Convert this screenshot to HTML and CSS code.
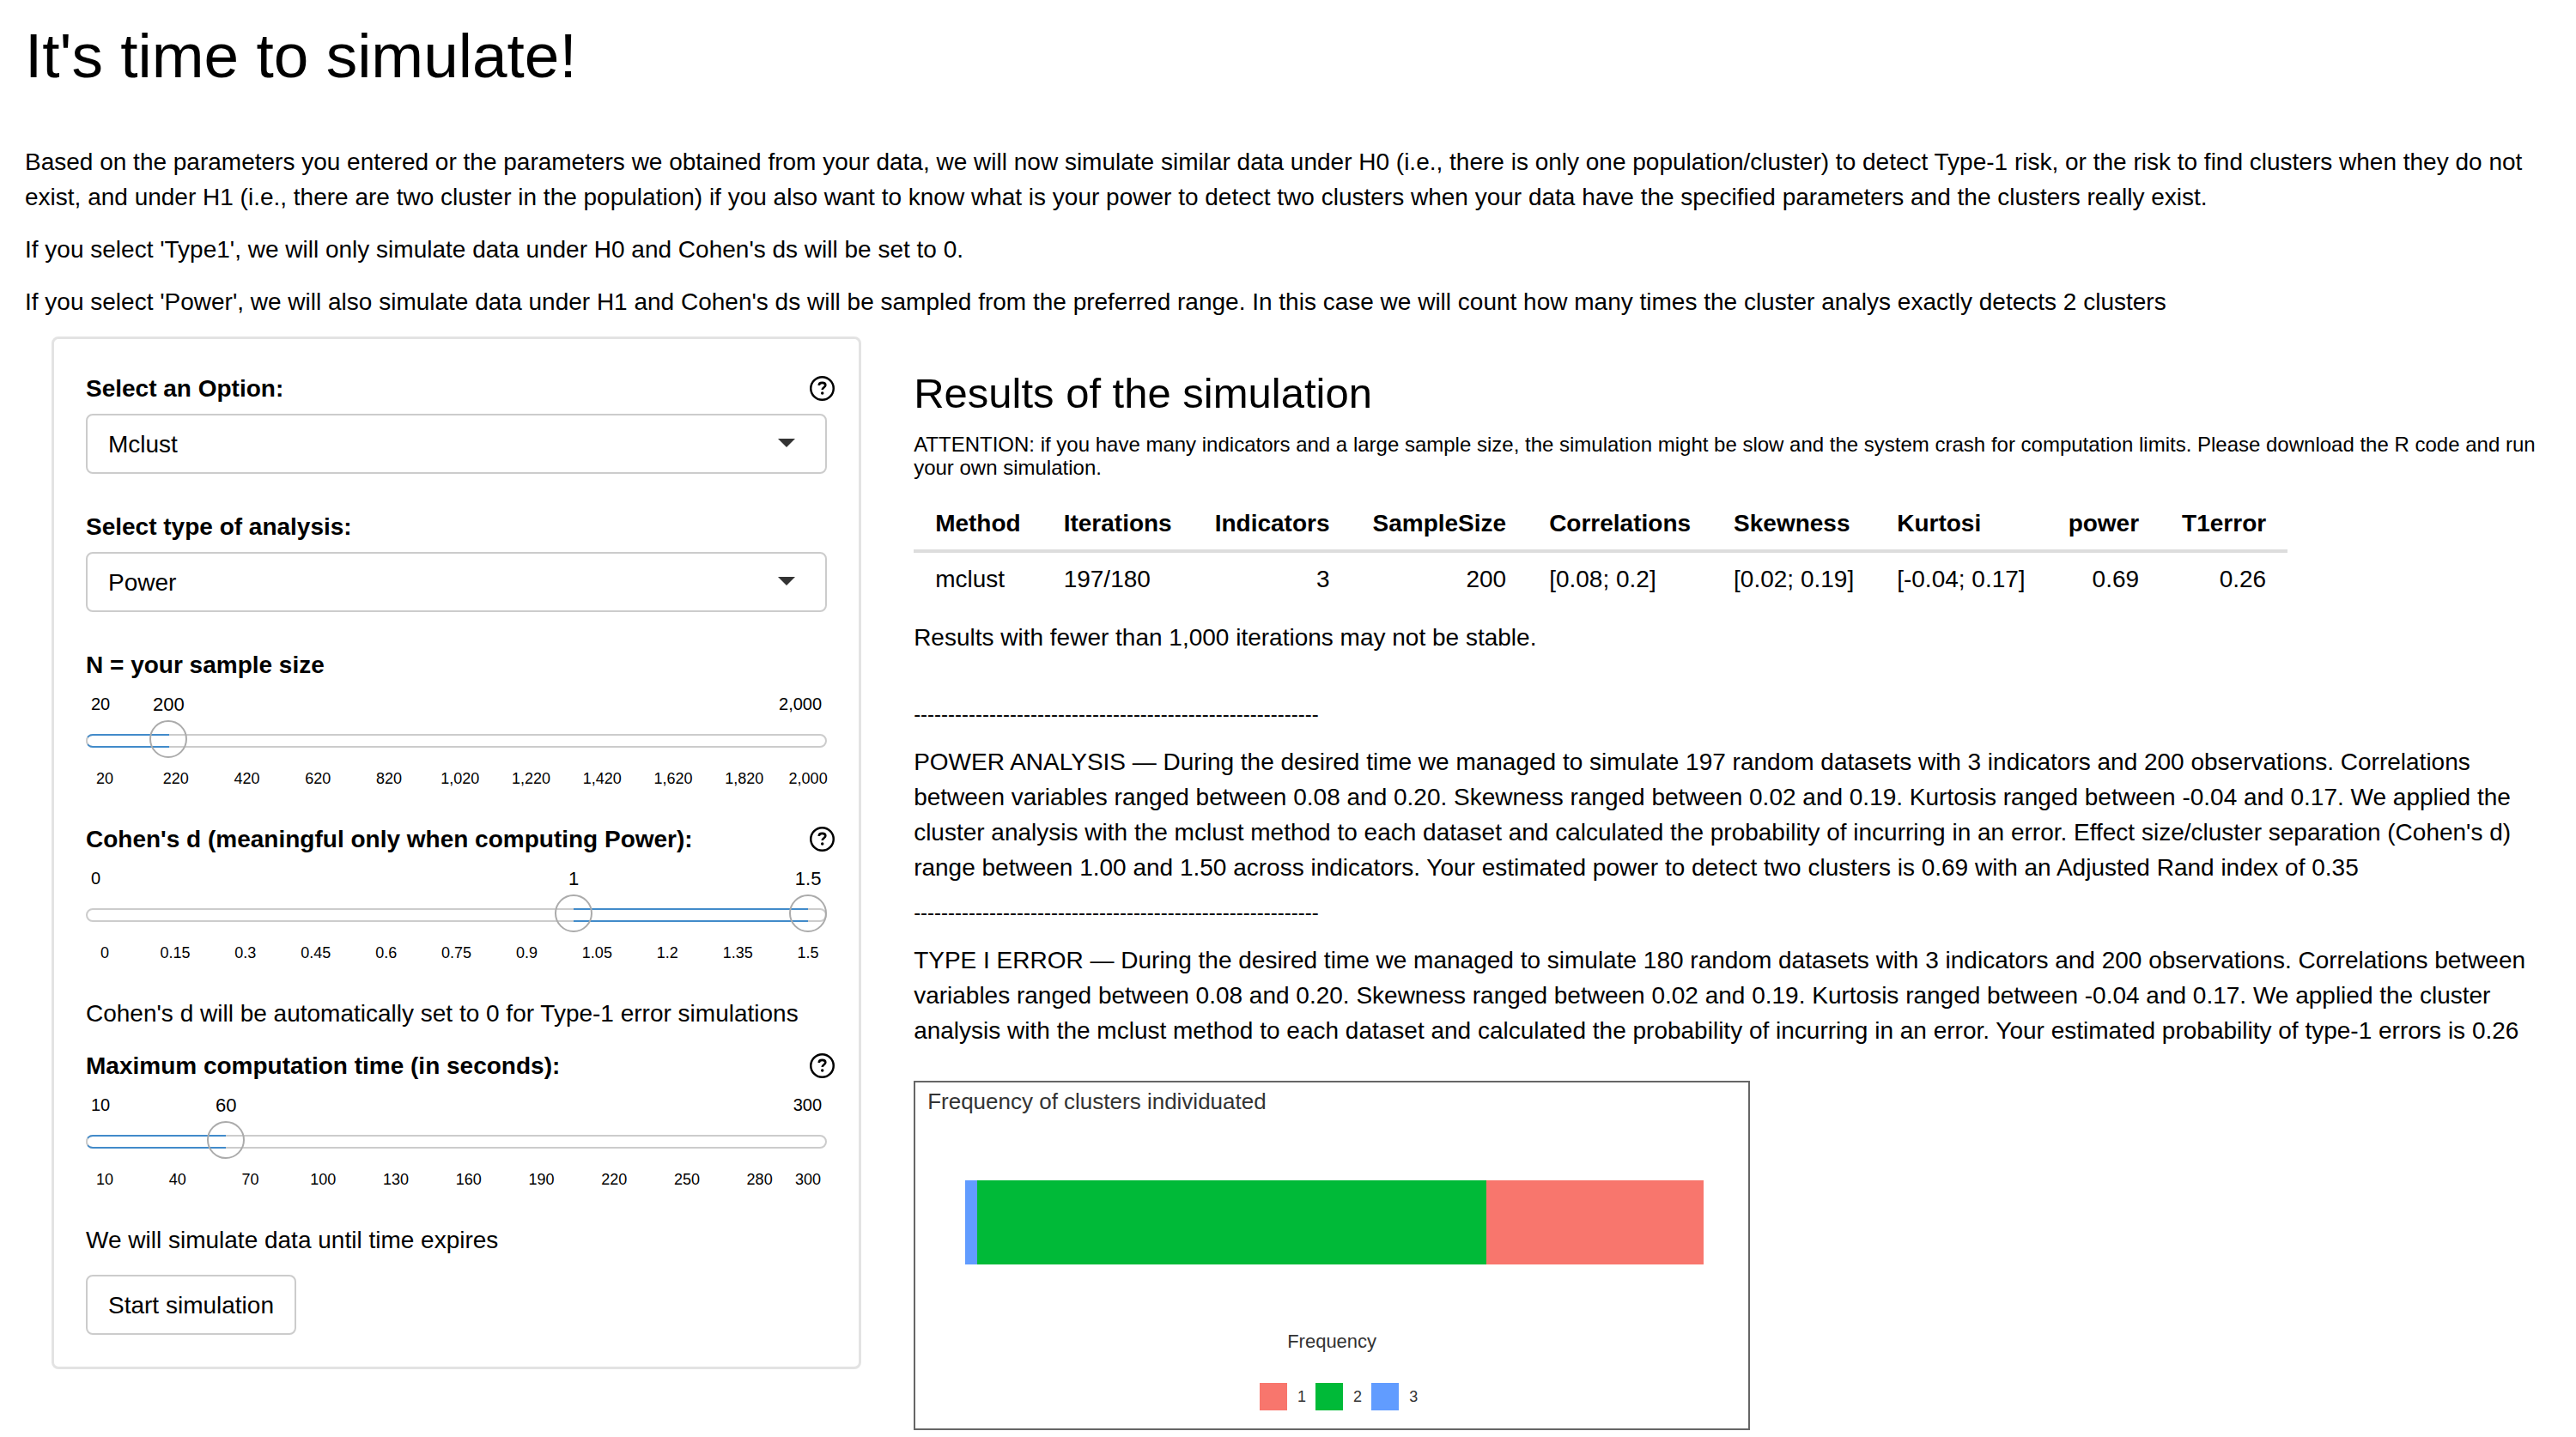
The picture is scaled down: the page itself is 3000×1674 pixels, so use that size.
FILE: index.html
```html
<!DOCTYPE html>
<html lang="en">
<head>
<meta charset="utf-8">
<title>It's time to simulate!</title>
<link rel="stylesheet" href="styles.css">
</head>
<body>
<svg class="sprite" aria-hidden="true">
  <symbol id="help" viewBox="0 0 28 28">
    <g fill="none" stroke="currentColor">
      <circle cx="14" cy="14" r="12.8" stroke-width="2.4"/>
      <path d="M10.4 10.6c0-2.2 1.5-3 3.6-3s3.7 1 3.7 2.8c0 2.4-3.5 2.3-3.5 5" stroke-width="2.5"/>
    </g>
    <circle cx="14.2" cy="19.4" r="1.7" fill="currentColor"/>
  </symbol>
</svg>

<header class="intro">
  <h1>It's time to simulate!</h1>
  <p>Based on the parameters you entered or the parameters we obtained from your data, we will now simulate similar data under H0 (i.e., there is only one population/cluster) to detect Type-1 risk, or the risk to find clusters when they do not exist, and under H1 (i.e., there are two cluster in the population) if you also want to know what is your power to detect two clusters when your data have the specified parameters and the clusters really exist.</p>
  <p>If you select 'Type1', we will only simulate data under H0 and Cohen's ds will be set to 0.</p>
  <p>If you select 'Power', we will also simulate data under H1 and Cohen's ds will be sampled from the preferred range. In this case we will count how many times the cluster analys exactly detects 2 clusters</p>
</header>

<div class="layout">
  <form class="sidebar">
    <div class="field">
      <div class="field-head">
        <label for="method">Select an Option:</label>
        <button type="button" class="help" aria-label="Help on methods"><svg><use href="#help"/></svg></button>
      </div>
      <div class="select"><select id="method"><option>Mclust</option></select></div>
    </div>
    <div class="field">
      <div class="field-head"><label for="analysis">Select type of analysis:</label></div>
      <div class="select"><select id="analysis"><option>Power</option><option>Type1</option></select></div>
    </div>

    <div class="field field-slider">
      <div class="field-head"><label for="n">N = your sample size</label></div>
      <div class="scale">
        <span class="min">20</span><span class="max">2,000</span>
        <div class="values"><output class="value" for="n" style="left:9.09%">200</output></div>
      </div>
      <div class="track">
        <div class="rail"></div>
        <div class="fill fill-start" style="width:11.25%"></div>
        <input type="range" id="n" min="20" max="2000" step="10" value="200">
      </div>
      <ol class="ticks ticks-n">
        <li>20</li><li>220</li><li>420</li><li>620</li><li>820</li><li>1,020</li><li>1,220</li><li>1,420</li><li>1,620</li><li>1,820</li><li>2,000</li>
      </ol>
    </div>

    <div class="field field-slider">
      <div class="field-head">
        <label for="d-low">Cohen's d (meaningful only when computing Power):</label>
        <button type="button" class="help" aria-label="Help on Cohen's d"><svg><use href="#help"/></svg></button>
      </div>
      <div class="scale">
        <span class="min">0</span>
        <div class="values">
          <output class="value" for="d-low" style="left:66.67%">1</output>
          <output class="value" for="d-high" style="left:100%">1.5</output>
        </div>
      </div>
      <div class="track">
        <div class="rail"></div>
        <div class="fill" style="left:65.8%;width:31.6%"></div>
        <input type="range" id="d-low" min="0" max="1.5" step="0.05" value="1">
        <input type="range" id="d-high" aria-label="Cohen's d, upper limit" min="0" max="1.5" step="0.05" value="1.5">
      </div>
      <ol class="ticks ticks-d">
        <li>0</li><li>0.15</li><li>0.3</li><li>0.45</li><li>0.6</li><li>0.75</li><li>0.9</li><li>1.05</li><li>1.2</li><li>1.35</li><li>1.5</li>
      </ol>
    </div>

    <p class="note">Cohen's d will be automatically set to 0 for Type-1 error simulations</p>

    <div class="field field-slider">
      <div class="field-head">
        <label for="time">Maximum computation time (in seconds):</label>
        <button type="button" class="help" aria-label="Help on computation time"><svg><use href="#help"/></svg></button>
      </div>
      <div class="scale">
        <span class="min">10</span><span class="max">300</span>
        <div class="values"><output class="value" for="time" style="left:17.24%">60</output></div>
      </div>
      <div class="track">
        <div class="rail"></div>
        <div class="fill fill-start" style="width:18.9%"></div>
        <input type="range" id="time" min="10" max="300" step="10" value="60">
      </div>
      <ol class="ticks ticks-time">
        <li>10</li><li>40</li><li>70</li><li>100</li><li>130</li><li>160</li><li>190</li><li>220</li><li>250</li><li>280</li><li>300</li>
      </ol>
    </div>

    <p class="note">We will simulate data until time expires</p>
    <button type="button" class="start">Start simulation</button>
  </form>

  <main class="results">
    <h2>Results of the simulation</h2>
    <p class="attention">ATTENTION: if you have many indicators and a large sample size, the simulation might be slow and the system crash for computation limits. Please download the R code and run your own simulation.</p>
    <table>
      <thead>
        <tr><th>Method</th><th>Iterations</th><th class="num">Indicators</th><th class="num">SampleSize</th><th>Correlations</th><th>Skewness</th><th>Kurtosi</th><th class="num">power</th><th class="num">T1error</th></tr>
      </thead>
      <tbody>
        <tr><td>mclust</td><td>197/180</td><td class="num">3</td><td class="num">200</td><td>[0.08; 0.2]</td><td>[0.02; 0.19]</td><td>[-0.04; 0.17]</td><td class="num">0.69</td><td class="num">0.26</td></tr>
      </tbody>
    </table>
    <p class="stability">Results with fewer than 1,000 iterations may not be stable.</p>
    <p class="rule">-----------------------------------------------------------</p>
    <p class="report">POWER ANALYSIS — During the desired time we managed to simulate 197 random datasets with 3 indicators and 200 observations. Correlations between variables ranged between 0.08 and 0.20. Skewness ranged between 0.02 and 0.19. Kurtosis ranged between -0.04 and 0.17. We applied the cluster analysis with the mclust method to each dataset and calculated the probability of incurring in an error. Effect size/cluster separation (Cohen's d) range between 1.00 and 1.50 across indicators. Your estimated power to detect two clusters is 0.69 with an Adjusted Rand index of 0.35</p>
    <p class="rule">-----------------------------------------------------------</p>
    <p class="report">TYPE I ERROR — During the desired time we managed to simulate 180 random datasets with 3 indicators and 200 observations. Correlations between variables ranged between 0.08 and 0.20. Skewness ranged between 0.02 and 0.19. Kurtosis ranged between -0.04 and 0.17. We applied the cluster analysis with the mclust method to each dataset and calculated the probability of incurring in an error. Your estimated probability of type-1 errors is 0.26</p>

    <figure class="chart">
      <figcaption>Frequency of clusters individuated</figcaption>
      <div class="bar">
        <div class="c3" style="flex-grow:3"></div>
        <div class="c2" style="flex-grow:124"></div>
        <div class="c1" style="flex-grow:53"></div>
      </div>
      <div class="axis">Frequency</div>
      <ul class="legend">
        <li><span class="swatch c1"></span>1</li>
        <li><span class="swatch c2"></span>2</li>
        <li><span class="swatch c3"></span>3</li>
      </ul>
    </figure>
  </main>
</div>
</body>
</html>
```
FILE: styles.css
```css
* { box-sizing: border-box; }

body {
  margin: 0;
  background: #fff;
  color: #000;
  font: 28px/41px "Liberation Sans", Arial, sans-serif;
}

h1, h2, p, ol, ul, figure { margin: 0; padding: 0; }
h1, h2 { font-weight: 400; }
ol, ul { list-style: none; }
.sprite { position: absolute; width: 0; height: 0; }

.intro { padding: 25px 8px 0 29px; }
.intro h1 { font-size: 73px; line-height: 80px; margin-bottom: 63px; }
.intro p { margin-bottom: 20px; }

.layout {
  display: grid;
  grid-template-columns: minmax(0, 33fr) minmax(0, 67fr);
  gap: 61px;
  align-items: start;
  padding: 0 21px 0 60px;
}

.sidebar {
  border: 3px solid #e3e3e3;
  border-radius: 8px;
  padding: 37px;
}

.field { margin-bottom: 41px; }
.field-head {
  display: flex;
  justify-content: space-between;
  align-items: center;
  height: 41px;
  margin: 0 -9px 9px 0;
}
.field-head label { font-weight: 700; }

.help {
  display: flex;
  padding: 0;
  border: 0;
  background: none;
  color: #000;
}
.help svg { width: 29px; height: 29px; }

.select { position: relative; }
.select::after {
  content: "";
  position: absolute;
  right: 37px;
  top: 29px;
  border: 10px solid transparent;
  border-top-color: #333;
  border-bottom: 0;
  pointer-events: none;
}
.select select {
  display: block;
  width: 100%;
  height: 70px;
  padding: 0 24px;
  border: 2px solid #ccc;
  border-radius: 8px;
  background: #fff;
  color: #000;
  font: inherit;
  appearance: none;
}

.field-slider { margin-bottom: 37px; }
.field-slider .field-head { margin-bottom: 10px; }
.scale {
  position: relative;
  display: flex;
  justify-content: space-between;
  height: 30px;
  padding: 0 6px;
  font-size: 20px;
  line-height: 30px;
}
.values { position: absolute; inset: 0 22px; }
.value {
  position: absolute;
  width: 80px;
  margin-left: -40px;
  text-align: center;
  font-size: 22px;
  line-height: 32px;
}

.track { position: relative; height: 44px; margin-top: 4px; }
.rail, .fill {
  position: absolute;
  top: 16px;
  height: 16px;
  border: solid #ccc;
  border-width: 2px 0;
}
.rail { width: 100%; border-width: 2px; border-radius: 8px; }
.fill { border-color: #428bca; }
.fill-start { border-left: 1px solid #ccc; border-radius: 8px 0 0 8px; }
.track input {
  position: absolute;
  inset: 0;
  width: 100%;
  height: 44px;
  margin: 0;
  appearance: none;
  background: none;
  pointer-events: none;
}
.track input::-webkit-slider-thumb {
  appearance: none;
  width: 44px;
  height: 44px;
  border: 2px solid #ababab;
  border-radius: 50%;
  background: transparent;
  pointer-events: auto;
}

.ticks {
  display: grid;
  padding: 0 22px;
  margin-top: 11px;
  font-size: 18px;
  line-height: 26px;
}
.ticks li { display: flex; justify-content: center; width: 0; white-space: nowrap; }
.ticks-n { grid-template-columns: repeat(9, 10fr) 9fr 0; }
.ticks-d { grid-template-columns: repeat(10, 1fr) 0; }
.ticks-time { grid-template-columns: repeat(9, 3fr) 2fr 0; }

.note { margin-bottom: 20px; }
.start {
  display: block;
  height: 70px;
  padding: 0 24px;
  border: 2px solid #ccc;
  border-radius: 8px;
  background: #fff;
  color: #000;
  font: inherit;
}

.results { padding-top: 39px; }
.results h2 { font-size: 49px; line-height: 54px; margin-bottom: 19px; }
.attention { font-size: 24px; line-height: 27px; margin-bottom: 21px; }

table { border-collapse: collapse; margin-bottom: 17px; }
th, td { padding: 10px 25px; text-align: left; white-space: nowrap; }
th { border-bottom: 4px solid #ddd; }
.num { text-align: right; }

.stability { margin-bottom: 48px; }
.rule { font-size: 24px; }
.report { margin: 15px 0 11px; }

.chart {
  width: 974px;
  max-width: 100%;
  margin-top: 38px;
  padding: 6px 14px 21px;
  border: 2px solid #666;
  color: #333;
}
.chart figcaption { font-size: 26px; line-height: 32px; }
.bar { display: flex; height: 98px; margin: 76px 38px 77px 44px; }
.bar div { flex: 1 0 0; }
.c1 { background: #f8766d; }
.c2 { background: #00ba38; }
.c3 { background: #619cff; }
.axis { text-align: center; font-size: 22px; line-height: 26px; }
.legend {
  display: flex;
  justify-content: center;
  gap: 11px;
  margin-top: 35px;
  padding-left: 16px;
  font-size: 18px;
  line-height: 32px;
}
.legend li { display: flex; gap: 12px; }
.swatch { width: 32px; height: 32px; }
```
